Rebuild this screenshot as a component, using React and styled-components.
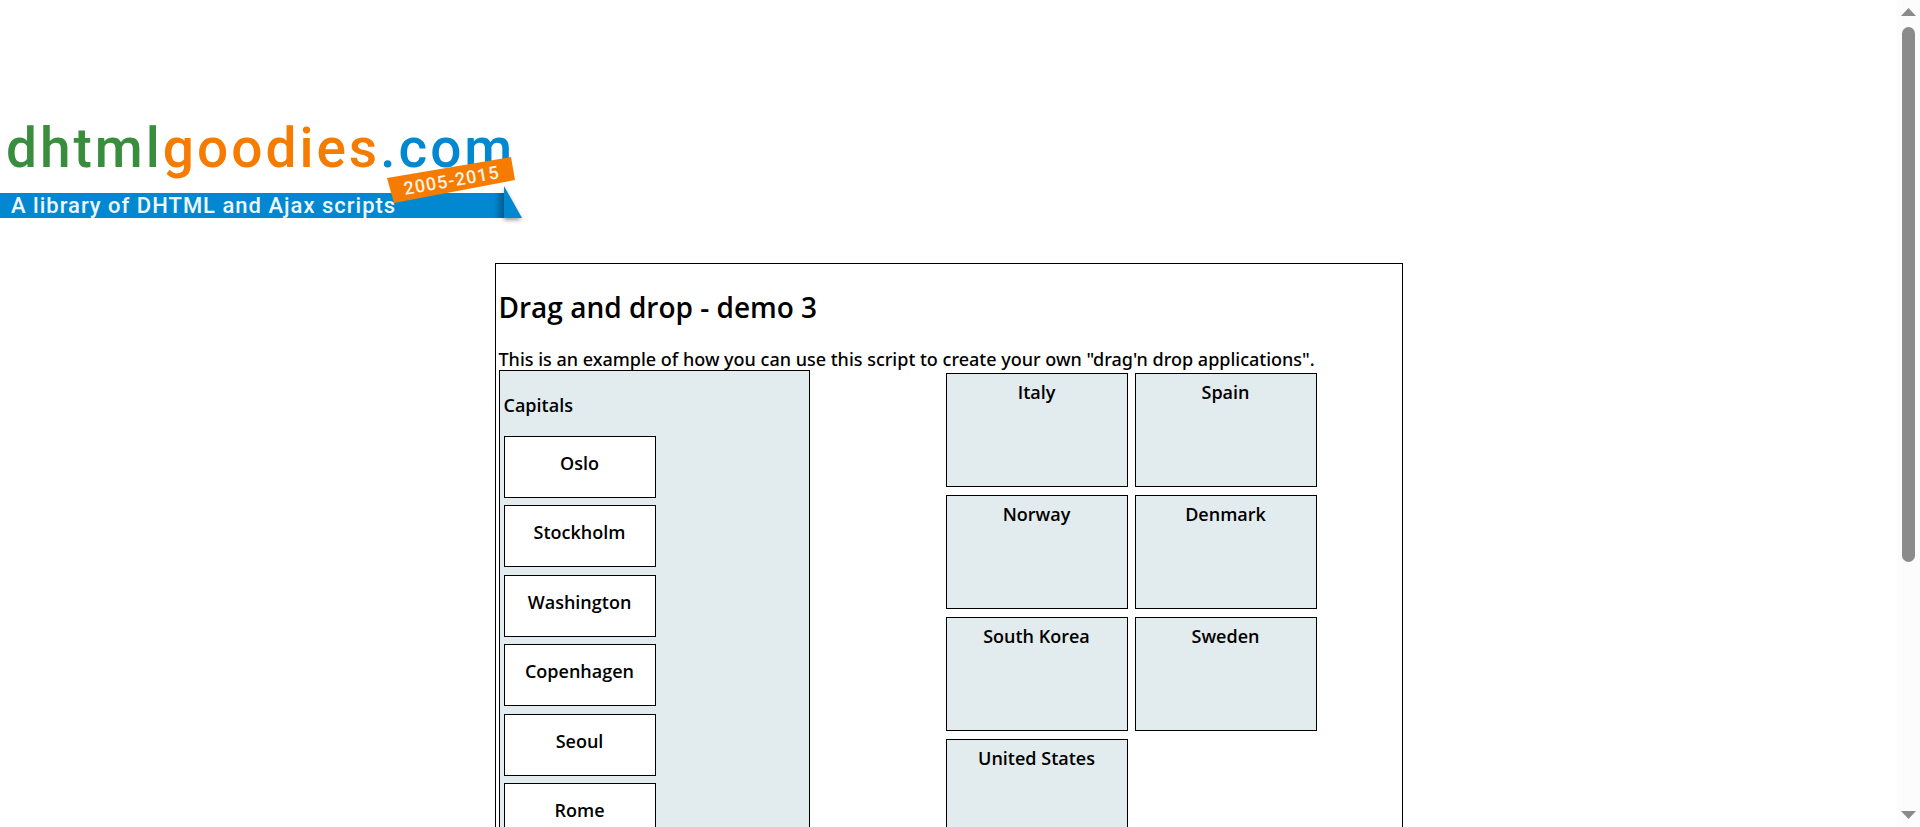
import React from "react";
import styled, { createGlobalStyle } from "styled-components";

const capitals = ["Oslo", "Stockholm", "Washington", "Copenhagen", "Seoul", "Rome"];
const countries = ["Italy", "Spain", "Norway", "Denmark", "South Korea", "Sweden", "United States"];

const GlobalStyle = createGlobalStyle`
  * { box-sizing: border-box; }
  body {
    margin: 0;
    background: #fff;
    color: #000;
    font-family: "Trebuchet MS", "Open Sans", sans-serif;
    font-size: 18px;
    line-height: 22px;
  }
`;

const Window = styled.div`
  display: flex;
  height: 100vh;
`;

const Page = styled.div`
  flex: 1;
  min-width: 0;
  overflow: hidden;
`;

const Header = styled.header`
  padding-top: 110px;
`;

const LogoLink = styled.a`
  display: block;
  width: 530px;
  height: 153px;
`;

const Container = styled.main`
  width: 908px;
  max-width: 100%;
  margin: 0 auto;
  padding: 0 3px;
  border: 1px solid #000;
  border-bottom: 0;
`;

const Title = styled.h1`
  margin: 26px 0 24px;
  font-size: 28px;
  line-height: 34px;
  font-weight: 600;
`;

const Intro = styled.p`
  margin: 0;
  font-family: "Trebuchet MS", "Noto Sans", sans-serif;
  font-weight: 500;
  white-space: nowrap;
`;

const Board = styled.div`
  display: flex;
  justify-content: space-between;
  align-items: flex-start;
  padding-right: 82px;
`;

const CapitalPanel = styled.section`
  width: 311px;
  padding: 23px 4px 36px;
  border: 1px solid #000;
  background: #e2ebed;
`;

const PanelTitle = styled.h2`
  margin: 0 0 20px;
  font-size: 18px;
  line-height: 22px;
  font-weight: 600;
`;

const CapitalList = styled.div`
  display: flex;
  flex-direction: column;
  justify-content: space-between;
  align-items: flex-start;
  min-height: 409px;
`;

const Box = styled.div`
  border: 1px solid #000;
  font-weight: 600;
  text-align: center;
`;

const CapitalBox = styled(Box)`
  width: 152px;
  height: 62px;
  padding-top: 15px;
  background: #fff;
  cursor: move;
`;

const CountryGrid = styled.section`
  display: grid;
  grid-template-columns: repeat(2, 182px);
  gap: 8px 7px;
  padding-top: 3px;
`;

const CountryBox = styled(Box)`
  height: 114px;
  padding-top: 7px;
  background: #e2ebed;
`;

const ScrollTrack = styled.div`
  display: flex;
  flex-direction: column;
  align-items: center;
  width: 23px;
  padding: 8px 0;
  background: #fcfcfc;
`;

const Thumb = styled.div`
  width: 13px;
  height: 66%;
  margin: 11px 0 auto;
  border-radius: 7px;
  background: #8b8b8b;
`;

function Arrow({ down }) {
  return (
    <svg width="15" height="8" viewBox="0 0 15 8" aria-hidden="true">
      <path d={down ? "M0 0H15L7.5 8Z" : "M0 8H15L7.5 0Z"} fill="#8b8b8b" />
    </svg>
  );
}

const LogoText = styled.text`
  font-family: Roboto, sans-serif;
  font-weight: 500;
  font-size: ${(p) => p.$size}px;
  letter-spacing: ${(p) => p.$tracking}px;
`;

function Logo() {
  return (
    <svg width="530" height="120" viewBox="0 0 530 120" role="img" aria-label="dhtmlgoodies.com">
      <defs>
        <linearGradient id="fold" x1="0" x2="1">
          <stop offset="0" stopColor="#015c92" stopOpacity="0" />
          <stop offset="1" stopColor="#015c92" />
        </linearGradient>
        <filter id="shade" x="-50%" y="-50%" width="200%" height="200%">
          <feGaussianBlur stdDeviation="2" />
        </filter>
      </defs>
      <LogoText x="6" y="57" $size={55} $tracking={3}>
        <tspan fill="#388e3c">dhtml</tspan>
        <tspan fill="#f57c00">goodies</tspan>
        <tspan fill="#0288d1">.com</tspan>
      </LogoText>
      <path d="M504 78L521 110H504Z" fill="#000" opacity="0.4" filter="url(#shade)" />
      <path d="M0 83H504V108H0Z" fill="#0288d1" />
      <path d="M494 83H504V108H494Z" fill="url(#fold)" />
      <path d="M504 76L522 108H504Z" fill="#0288d1" />
      <LogoText x="11" y="103" fill="#eef6fc" $size={22} $tracking={1}>
        A library of DHTML and Ajax scripts
      </LogoText>
      <path d="M387 68L511 47L515 70L394 93Z" fill="#f57c00" />
      <LogoText x="405" y="85" fill="#fff3e6" transform="rotate(-10 405 85)" $size={18} $tracking={1}>
        2005-2015
      </LogoText>
    </svg>
  );
}

export default function App() {
  return (
    <Window>
      <GlobalStyle />
      <Page>
        <Header>
          <LogoLink href="#"><Logo /></LogoLink>
        </Header>
        <Container>
          <Title>Drag and drop - demo 3</Title>
          <Intro>This is an example of how you can use this script to create your own "drag'n drop applications".</Intro>
          <Board>
            <CapitalPanel>
              <PanelTitle>Capitals</PanelTitle>
              <CapitalList>
                {capitals.map((name) => <CapitalBox key={name} draggable>{name}</CapitalBox>)}
              </CapitalList>
            </CapitalPanel>
            <CountryGrid>
              {countries.map((name) => <CountryBox key={name}>{name}</CountryBox>)}
            </CountryGrid>
          </Board>
        </Container>
      </Page>
      <ScrollTrack aria-hidden="true">
        <Arrow />
        <Thumb />
        <Arrow down />
      </ScrollTrack>
    </Window>
  );
}
